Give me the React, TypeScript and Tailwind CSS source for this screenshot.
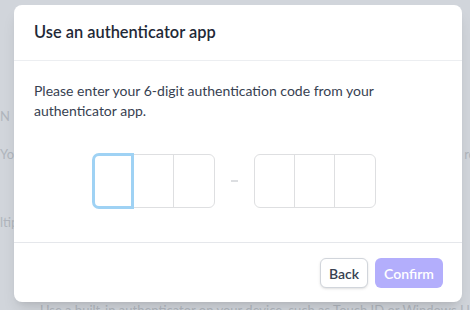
import React from "react";

// 6자리 코드 입력 칸 한 묶음 (3칸)
function CodeGroup({ focused = false }: { focused?: boolean }) {
  return (
    <div className="flex rounded-md border border-[#dedfe1] bg-white">
      {[0, 1, 2].map((i) => (
        <div
          key={i}
          className={`relative h-[52px] w-10 ${i < 2 ? "border-r border-[#dedfe1]" : ""}`}
        >
          {focused && i === 0 && (
            <div className="absolute -top-[2px] -bottom-[2px] -left-[2px] -right-[1px] rounded-l-[7px] border-[3px] border-[#9fd2f4]" />
          )}
        </div>
      ))}
    </div>
  );
}

export default function App() {
  return (
    <div
      className="relative h-[310px] w-[470px] overflow-hidden bg-[#d1d5db] text-[13px] text-[#b0b5bd]"
      style={{ fontFamily: "Lato, 'Liberation Sans', sans-serif" }}
    >
      {/* 뒤쪽 페이지 (오버레이에 가려짐) */}
      <div className="absolute left-0 top-[110px] leading-none">N</div>
      <div className="absolute left-0 top-[148px] leading-none">You</div>
      <div className="absolute right-[-6px] top-[148px] leading-none">ro</div>
      <div className="absolute left-0 top-[216px] leading-none">ltip</div>
      <div className="absolute left-[40px] top-[304px] whitespace-nowrap leading-none">
        Use a built-in authenticator on your device, such as Touch ID or Windows Hello
      </div>

      {/* 모달 */}
      <div className="absolute inset-0 pl-[14px] pt-[5px]">
        <div className="w-[448px] overflow-hidden rounded-lg bg-white shadow-lg">
          <div className="flex h-[56px] items-center border-b border-[#eceef1] px-5">
            <h2 className="text-[16.4px] font-semibold text-[#1f2937]">Use an authenticator app</h2>
          </div>

          <div className="px-5 pb-[34px] pt-5">
            <p className="text-[14px] leading-5 text-[#374151]">
              Please enter your 6-digit authentication code from your authenticator app.
            </p>
            <div className="ml-[59px] mt-[33px] flex items-center">
              <CodeGroup focused />
              <div className="mx-4 h-[2px] w-[7px] bg-[#dcdee1]" />
              <CodeGroup />
            </div>
          </div>

          <div className="flex justify-end gap-[7px] border-t border-[#e5e7eb] pb-[14px] pl-5 pr-[19px] pt-[15px]">
            <button className="h-[30px] rounded-md border border-[#d1d5db] bg-white px-[8px] text-[14px] font-semibold text-[#374151] shadow-sm">
              Back
            </button>
            <button
              disabled
              className="h-[30px] rounded-md bg-[#b3aefc] px-[9px] text-[14px] font-semibold text-white"
            >
              Confirm
            </button>
          </div>
        </div>
      </div>
    </div>
  );
}
